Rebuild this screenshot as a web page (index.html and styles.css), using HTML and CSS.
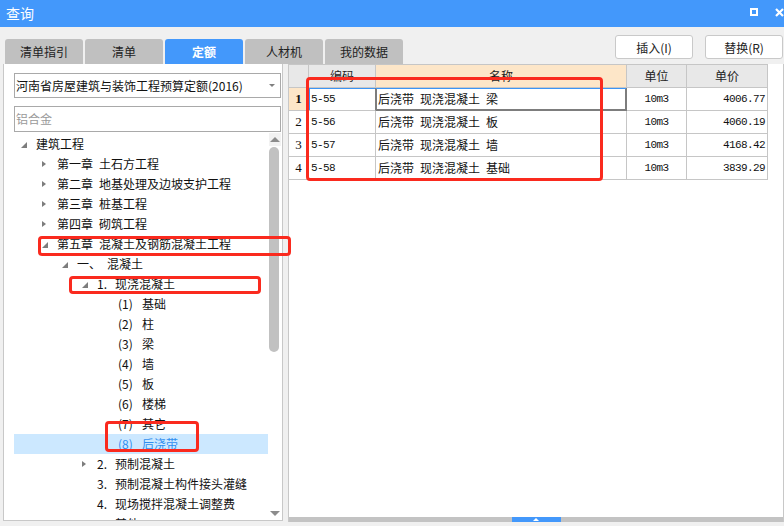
FILE: index.html
```html
<!DOCTYPE html>
<html lang="zh-CN">
<head>
<meta charset="utf-8">
<title>查询</title>
<link rel="stylesheet" href="styles.css">
</head>
<body>
<div class="titlebar">
  <span class="title">查询</span>
  <svg class="winctl" width="34" height="27" viewBox="0 0 34 27">
    <rect x="1" y="9" width="6" height="6" fill="none" stroke="#fff" stroke-width="2"/>
    <path d="M26 9 L33 16 M33 9 L26 16" stroke="#fff" stroke-width="2.2" fill="none"/>
  </svg>
</div>

<div class="toolbar">
  <div class="tabs">
    <div class="tab">清单指引</div>
    <div class="tab">清单</div>
    <div class="tab active">定额</div>
    <div class="tab">人材机</div>
    <div class="tab">我的数据</div>
  </div>
  <div class="actions">
    <button class="btn">插入(I)</button>
    <button class="btn">替换(R)</button>
  </div>
</div>

<div class="main">
  <div class="left">
    <div class="select"><span>河南省房屋建筑与装饰工程预算定额(2016)</span><i class="caret"></i></div>
    <div class="search">铝合金</div>
    <div class="treewrap">
      <div class="tree">
        <div class="row l0"><i class="ar ex"></i><span>建筑工程</span></div>
        <div class="row l1"><i class="ar co"></i><span class="pre w3">第一章</span>土石方工程</div>
        <div class="row l1"><i class="ar co"></i><span class="pre w3">第二章</span>地基处理及边坡支护工程</div>
        <div class="row l1"><i class="ar co"></i><span class="pre w3">第三章</span>桩基工程</div>
        <div class="row l1"><i class="ar co"></i><span class="pre w3">第四章</span>砌筑工程</div>
        <div class="row l1"><i class="ar ex"></i><span class="pre w3">第五章</span>混凝土及钢筋混凝土工程</div>
        <div class="row l2"><i class="ar ex"></i><span class="pre w2">一、</span>混凝土</div>
        <div class="row l3"><i class="ar ex"></i><span class="pre wn">1.</span>现浇混凝土</div>
        <div class="row l4"><i class="ar"></i><span class="pre wp">(1)</span>基础</div>
        <div class="row l4"><i class="ar"></i><span class="pre wp">(2)</span>柱</div>
        <div class="row l4"><i class="ar"></i><span class="pre wp">(3)</span>梁</div>
        <div class="row l4"><i class="ar"></i><span class="pre wp">(4)</span>墙</div>
        <div class="row l4"><i class="ar"></i><span class="pre wp">(5)</span>板</div>
        <div class="row l4"><i class="ar"></i><span class="pre wp">(6)</span>楼梯</div>
        <div class="row l4"><i class="ar"></i><span class="pre wp">(7)</span>其它</div>
        <div class="row l4 sel"><i class="ar"></i><span class="pre wp">(8)</span>后浇带</div>
        <div class="row l3"><i class="ar co"></i><span class="pre wn">2.</span>预制混凝土</div>
        <div class="row l3"><i class="ar"></i><span class="pre wn">3.</span>预制混凝土构件接头灌缝</div>
        <div class="row l3"><i class="ar"></i><span class="pre wn">4.</span>现场搅拌混凝土调整费</div>
        <div class="row l3"><i class="ar"></i><span class="pre wn">5.</span>其他</div>
      </div>
      <div class="vscroll">
        <div class="sbtn"><i class="up"></i></div>
        <div class="thumb"></div>
        <div class="sbtn bottom"><i class="down"></i></div>
      </div>
    </div>
  </div>

  <div class="splitter"></div>

  <div class="right">
    <div class="grid">
      <div class="c h rn"></div>
      <div class="c h">编码</div>
      <div class="c h cur">名称</div>
      <div class="c h">单位</div>
      <div class="c h">单价</div>

      <div class="c rn cur b">1</div>
      <div class="c code first">5-55</div>
      <div class="c name focus">后浇带&ensp;现浇混凝土&ensp;梁</div>
      <div class="c unit">10m3</div>
      <div class="c price">4006.77</div>

      <div class="c rn">2</div>
      <div class="c code">5-56</div>
      <div class="c name">后浇带&ensp;现浇混凝土&ensp;板</div>
      <div class="c unit">10m3</div>
      <div class="c price">4060.19</div>

      <div class="c rn">3</div>
      <div class="c code">5-57</div>
      <div class="c name">后浇带&ensp;现浇混凝土&ensp;墙</div>
      <div class="c unit">10m3</div>
      <div class="c price">4168.42</div>

      <div class="c rn">4</div>
      <div class="c code">5-58</div>
      <div class="c name">后浇带&ensp;现浇混凝土&ensp;基础</div>
      <div class="c unit">10m3</div>
      <div class="c price">3839.29</div>
    </div>
    <div class="hstrip"><div class="handle"><i class="tri"></i></div></div>
  </div>
</div>

<div class="mark mark-table"></div>
<div class="mark mark-ch5"></div>
<div class="mark mark-xj"></div>
<div class="mark mark-hjd"></div>
</body>
</html>
```

FILE: styles.css
```css
* { box-sizing: border-box; margin: 0; padding: 0; }
html, body { width: 784px; height: 526px; overflow: hidden; }
body {
  position: relative;
  background: #f0f0f0;
  font-family: "Noto Sans CJK SC", "Noto Sans", sans-serif;
  font-size: 12px;
  color: #111;
}

/* title bar */
.titlebar {
  height: 27px;
  background: #4398fb;
  color: #fff;
  display: flex;
  align-items: center;
  padding-left: 6px;
}
.titlebar .title { font-size: 14px; line-height: 27px; flex: 1; }
.winctl { display: block; }

/* toolbar with tabs + buttons */
.toolbar {
  height: 37px;
  display: flex;
  padding-left: 5px;
}
.tabs { display: flex; align-self: flex-end; gap: 2px; }
.tab {
  width: 78px;
  height: 25px;
  background: #c0c0c0;
  border-radius: 3px 3px 0 0;
  display: flex;
  align-items: center;
  justify-content: center;
  color: #222;
  font-size: 12px;
}
.tab.active { background: #4398fb; color: #fff; font-weight: bold; }
.actions { margin-left: auto; margin-top: 8px; display: flex; gap: 12px; padding-right: 1px; }
.btn {
  width: 78px;
  height: 24px;
  background: #fff;
  border: 1px solid #c9c9c9;
  border-radius: 3px;
  font-family: inherit;
  font-size: 12px;
  color: #222;
}

/* main area */
.main { display: flex; align-items: flex-start; height: 458px; }

.left {
  width: 280px;
  height: 457px;
  margin-left: 3px;
  background: #fff;
  border-left: 1px solid #c8c8c8;
  border-right: 1px solid #c8c8c8;
  border-bottom: 1px solid #c8c8c8;
  padding: 9px 0 0 10px;
  display: flex;
  flex-direction: column;
  overflow: hidden;
}
.select {
  width: 267px;
  height: 25px;
  border: 1px solid #a9a9a9;
  display: flex;
  align-items: center;
  justify-content: space-between;
  padding: 0 5px 0 1px;
  white-space: nowrap;
}
.caret {
  width: 0; height: 0;
  border-left: 3px solid transparent;
  border-right: 3px solid transparent;
  border-top: 3px solid #808080;
}
.search {
  width: 267px;
  height: 26px;
  margin-top: 8px;
  border: 1px solid #a9a9a9;
  color: #9a9a9a;
  line-height: 24px;
  padding-left: 1px;
}

.treewrap { flex: 1; display: flex; margin-top: 1px; min-height: 0; }
.tree { width: 254px; padding-top: 1px; overflow: hidden; }
.row {
  height: 20px;
  display: flex;
  align-items: center;
  white-space: nowrap;
  line-height: 20px;
}
.l0 { padding-left: 7px; }
.l1 { padding-left: 28px; }
.l2 { padding-left: 48px; }
.l3 { padding-left: 68px; }
.l4 { padding-left: 89px; }
.row.sel { background: #cce8ff; color: #2f8ef0; }
.ar { width: 15px; height: 20px; flex: none; position: relative; }
.ar.ex::after {
  content: "";
  position: absolute;
  left: 0; top: 8px;
  border-bottom: 6px solid #7d7d7d;
  border-left: 6px solid transparent;
}
.ar.co::after {
  content: "";
  position: absolute;
  left: 0; top: 7px;
  border-left: 4px solid #7d7d7d;
  border-top: 3px solid transparent;
  border-bottom: 3px solid transparent;
}
.pre { display: inline-block; }
.w3 { width: 42px; }
.w2 { width: 30px; }
.wn { width: 18px; }
.wp { width: 24px; }

.vscroll { width: 13px; display: flex; flex-direction: column; padding-left: 1px; }
.sbtn { height: 13px; display: flex; align-items: center; justify-content: center; background: #f2f2f2; }
.sbtn.bottom { margin-top: auto; background: #fff; }
.up { border-left: 5px solid transparent; border-right: 5px solid transparent; border-bottom: 5px solid #8c8c8c; }
.down { border-left: 5px solid transparent; border-right: 5px solid transparent; border-top: 5px solid #8c8c8c; }
.thumb { width: 10px; height: 205px; margin-top: 1px; background: #c1c1c1; border-radius: 5px; }

.splitter { width: 5px; height: 458px; }

.right {
  flex: 1;
  height: 458px;
  background: #fff;
  border-left: 1px solid #c8c8c8;
  border-right: 1px solid #c8c8c8;
  display: flex;
  flex-direction: column;
}
.grid {
  display: grid;
  grid-template-columns: 20px 67px 251px 60px 81px;
  grid-auto-rows: 23px;
  grid-template-rows: 24px;
  width: 479px;
}
.c {
  border-right: 1px solid #c6c6c6;
  border-bottom: 1px solid #c6c6c6;
  line-height: 22px;
  white-space: nowrap;
  overflow: hidden;
}
.c.h {
  border-top: 1px solid #c6c6c6;
  background: #e8e8e8;
  text-align: center;
  color: #222;
}
.c.h.cur, .c.rn.cur { background: #fde6c8; }
.c.rn { text-align: center; font-family: "Liberation Serif", "DejaVu Serif", serif; font-size: 13px; }
.c.rn.b { font-weight: bold; }
.code, .unit, .price {
  font-family: "Liberation Mono", "DejaVu Sans Mono", monospace;
  font-size: 11px;
  letter-spacing: -0.6px;
}
.code { padding-left: 2px; }
.name { padding-left: 2px; }
.unit { text-align: center; }
.price { text-align: right; padding-right: 2px; }
.code.first { border-right-color: #7d7d7d; box-shadow: inset 1px 1px 0 #3c95f5; }
.name.focus {
  border-right-color: #7d7d7d;
  border-bottom-color: #7d7d7d;
  box-shadow: inset 0 1px 0 #3c95f5, inset 1px 0 0 #7d7d7d, inset -1px 0 0 #7d7d7d, inset 0 -1px 0 #7d7d7d;
}

.hstrip {
  margin-top: auto;
  height: 5px;
  background: #c3c3c3;
  display: flex;
  justify-content: center;
}
.handle {
  width: 49px;
  height: 5px;
  background: #4398fb;
  display: flex;
  align-items: center;
  justify-content: center;
}
.tri { border-left: 3px solid transparent; border-right: 3px solid transparent; border-bottom: 3px solid #fff; }

/* red annotation boxes drawn over the screenshot */
.mark { position: absolute; border: 3px solid #fa2a1e; border-radius: 4px; pointer-events: none; }
.mark-table { left: 306px; top: 77px; width: 297px; height: 104px; }
.mark-ch5 { left: 38px; top: 236px; width: 253px; height: 20px; }
.mark-xj { left: 69px; top: 276px; width: 192px; height: 18px; }
.mark-hjd { left: 105px; top: 421px; width: 94px; height: 31px; }
```
